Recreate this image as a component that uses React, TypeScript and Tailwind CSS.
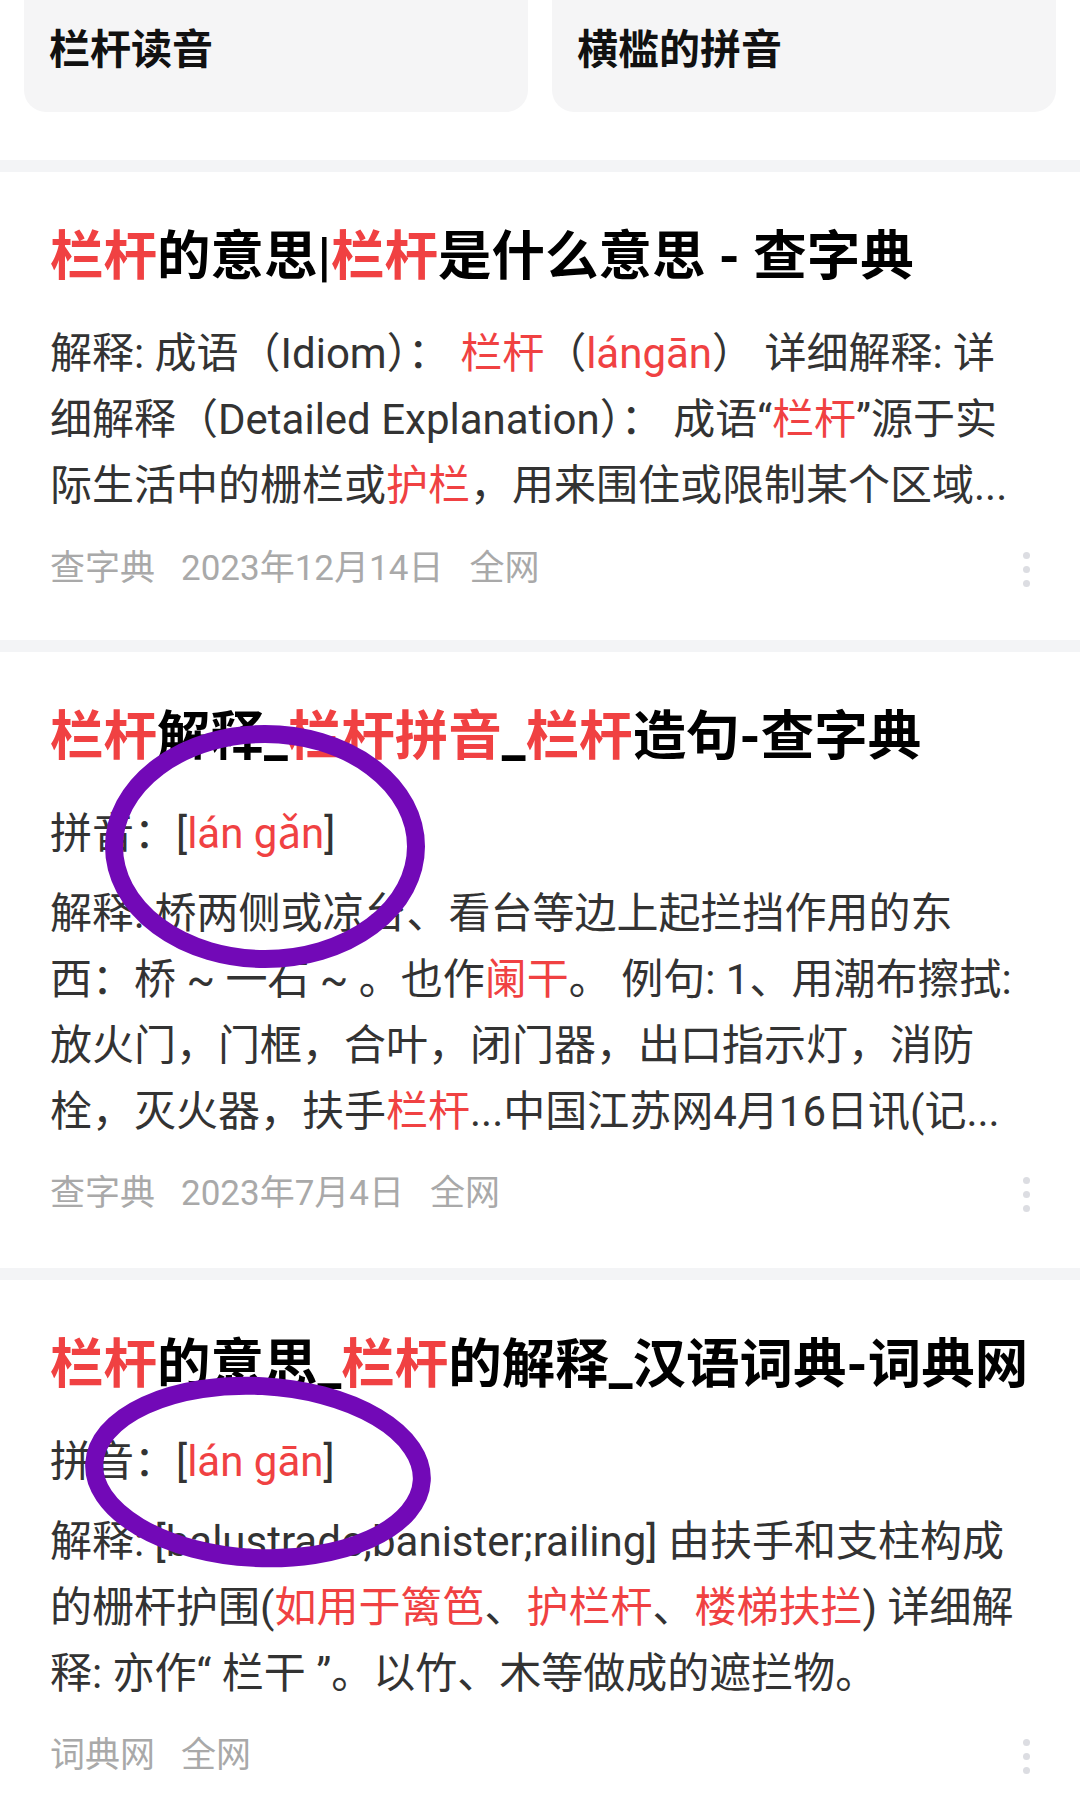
import React from "react";

const FONT = 'Roboto, "Noto Sans CJK SC", sans-serif';

const R = ({ children }: { children: React.ReactNode }) => (
  <span className="text-[#f04142]">{children}</span>
);

function Dots() {
  return (
    <div className="flex flex-col items-center gap-[7px] w-[8px]">
      <span className="block w-[7px] h-[7px] rounded-full bg-[#dcdde2]" />
      <span className="block w-[7px] h-[7px] rounded-full bg-[#dcdde2]" />
      <span className="block w-[7px] h-[7px] rounded-full bg-[#dcdde2]" />
    </div>
  );
}

function Meta({ items }: { items: string[] }) {
  return (
    <div className="flex items-center justify-between mt-[25px] h-[50px]">
      <div className="flex gap-[26px] text-[35px] leading-[50px] text-[#a9a9a9] whitespace-nowrap">
        {items.map((t) => (
          <span key={t}>{t}</span>
        ))}
      </div>
      <Dots />
    </div>
  );
}

function Line({ children }: { children: React.ReactNode }) {
  return <div className="whitespace-nowrap">{children}</div>;
}

function Divider() {
  return <div className="h-[12px] bg-[#f3f4f6]" />;
}

export default function App() {
  return (
    <div className="w-[1080px] min-h-[1809px] bg-white" style={{ fontFamily: FONT }}>
      {/* related search chips */}
      <div className="flex gap-[24px] px-[24px]">
        <div className="flex-1 h-[112px] bg-[#f5f5f6] rounded-b-[22px] pl-[25px] pt-[20px] text-[41px] leading-[60px] font-bold text-[#111]">
          栏杆读音
        </div>
        <div className="flex-1 h-[112px] bg-[#f5f5f6] rounded-b-[22px] pl-[25px] pt-[20px] text-[41px] leading-[60px] font-bold text-[#111]">
          横槛的拼音
        </div>
      </div>
      <div className="h-[48px]" />
      <Divider />

      {/* card 1 */}
      <div className="px-[50px] pt-[49px] pb-[46px]">
        <div className="text-[53.5px] leading-[72px] font-bold text-black whitespace-nowrap">
          <R>栏杆</R>的意思|<R>栏杆</R>是什么意思 - 查字典
        </div>
        <div className="mt-[28px] text-[42px] leading-[66px] text-[#333]">
          <Line>
            解释: 成语（Idiom）： <R>栏杆</R>（<R>lángān</R>） 详细解释: 详
          </Line>
          <Line>
            细解释（Detailed Explanation）： 成语“<R>栏杆</R>”源于实
          </Line>
          <Line>
            际生活中的栅栏或<R>护栏</R>，用来围住或限制某个区域...
          </Line>
        </div>
        <Meta items={["查字典", "2023年12月14日", "全网"]} />
      </div>
      <Divider />

      {/* card 2 */}
      <div className="relative px-[50px] pt-[49px] pb-[49px]">
        <div className="text-[53.5px] leading-[72px] font-bold text-black whitespace-nowrap">
          <R>栏杆</R>解释_<R>栏杆拼音</R>_<R>栏杆</R>造句-查字典
        </div>
        <div className="mt-[28px] text-[42px] leading-[66px] text-[#333] whitespace-nowrap">
          拼音：[<R>lán gǎn</R>]
        </div>
        <div className="mt-[14px] text-[42px] leading-[66px] text-[#333]">
          <Line>解释: 桥两侧或凉台、看台等边上起拦挡作用的东</Line>
          <Line>
            西：桥 ~ 一石 ~ 。也作<R>阑干</R>。 例句: 1、用潮布擦拭:
          </Line>
          <Line>放火门，门框，合叶，闭门器，出口指示灯，消防</Line>
          <Line>
            栓，灭火器，扶手<R>栏杆</R>...中国江苏网4月16日讯(记...
          </Line>
        </div>
        <div className="mt-[24px] flex items-center justify-between h-[50px]">
          <div className="flex gap-[26px] text-[35px] leading-[50px] text-[#a9a9a9] whitespace-nowrap">
            <span>查字典</span>
            <span>2023年7月4日</span>
            <span>全网</span>
          </div>
          <Dots />
        </div>
        <svg
          className="absolute left-[105px] top-[73px] pointer-events-none"
          width="320"
          height="243"
          viewBox="0 0 320 243"
        >
          <ellipse cx="160" cy="121.5" rx="151" ry="112.5" fill="none" stroke="#7209b7" strokeWidth="18" />
        </svg>
      </div>
      <Divider />

      {/* card 3 */}
      <div className="relative px-[50px] pt-[49px] pb-[28px]">
        <div className="text-[53.5px] leading-[72px] font-bold text-black whitespace-nowrap">
          <R>栏杆</R>的意思_<R>栏杆</R>的解释_汉语词典-词典网
        </div>
        <div className="mt-[28px] text-[42px] leading-[66px] text-[#333] whitespace-nowrap">
          拼音：[<R>lán gān</R>]
        </div>
        <div className="mt-[14px] text-[42px] leading-[66px] text-[#333]">
          <Line>解释: [balustrade;banister;railing] 由扶手和支柱构成</Line>
          <Line>
            的栅杆护围(<R>如用于篱笆</R>、<R>护栏杆</R>、<R>楼梯扶拦</R>) 详细解
          </Line>
          <Line>释: 亦作“ 栏干 ”。以竹、木等做成的遮拦物。</Line>
        </div>
        <div className="mt-[24px] flex items-center justify-between h-[50px]">
          <div className="flex gap-[26px] text-[35px] leading-[50px] text-[#a9a9a9] whitespace-nowrap">
            <span>词典网</span>
            <span>全网</span>
          </div>
          <Dots />
        </div>
        <svg
          className="absolute left-[75px] top-[87px] pointer-events-none"
          width="366"
          height="210"
          viewBox="0 0 366 210"
        >
          <ellipse
            cx="183"
            cy="105"
            rx="164"
            ry="86"
            fill="none"
            stroke="#7209b7"
            strokeWidth="18"
            transform="rotate(3 183 105)"
          />
        </svg>
      </div>
    </div>
  );
}
